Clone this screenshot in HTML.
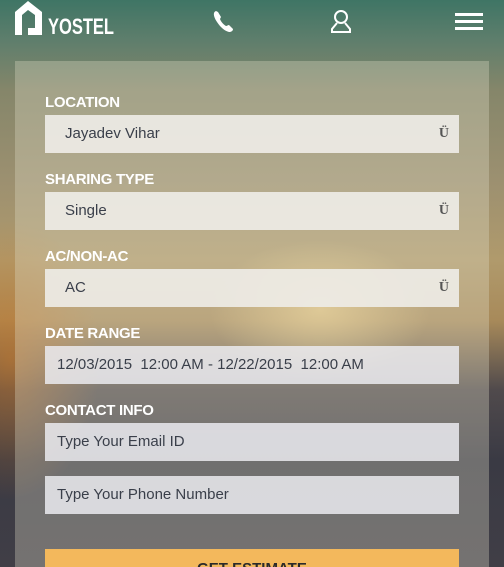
<!DOCTYPE html>
<html><head><meta charset="utf-8"><style>
*{margin:0;padding:0;box-sizing:border-box}
html{width:504px;height:567px;overflow:hidden;background:#45434a}
body{width:504px;height:567px;overflow:hidden;position:relative;font-family:"Liberation Sans",sans-serif;
background:
radial-gradient(ellipse 110px 70px at 320px 310px,rgba(255,225,150,.6),rgba(255,200,100,0) 100%),
radial-gradient(ellipse 90px 140px at 10px 360px,rgba(200,120,40,.6),rgba(200,120,40,0) 100%),
linear-gradient(180deg,#3f7565 0px,#5e7e6c 40px,#85866a 90px,#9c9070 180px,#b09a6c 260px,#a88a5a 320px,#504a4c 390px,#3a3a44 460px,#403e46 567px);}
.panel{position:absolute;left:15px;top:61px;width:474px;height:506px;background:rgba(225,222,200,.33)}
.hdr{position:absolute;top:0;left:0;width:504px;height:45px}
label{position:absolute;left:45px;color:#fff;font-weight:bold;font-size:15px;letter-spacing:-.3px}
.in{position:absolute;left:45px;width:414px;height:38px;background:rgba(238,236,230,.92);color:#3a3f4a;font-size:15px;line-height:38px;padding-left:20px}
.in.t{background:rgba(235,235,240,.85);padding-left:12px}
.car{position:absolute;right:10px;top:0;font-size:14px;color:#555;font-family:"Liberation Serif",serif;font-weight:bold}
.btn{position:absolute;left:45px;top:549px;width:414px;height:30px;background:#f3b85c;text-align:center;font-weight:bold;font-size:15px;color:#2a2a2a;padding-top:11px}
</style></head><body>
<div class="panel"></div>
<svg class="hdr" viewBox="0 0 504 45">
<path d="M15 35V12L28 1 42 12V35H28V28H35V15L28 10 22 15V35Z" fill="#fff"/>
<text x="48" y="34" fill="#fff" font-family="Liberation Sans" font-weight="bold" font-size="22" textLength="66" lengthAdjust="spacingAndGlyphs">YOSTEL</text>
<path d="M216 11c-3 1-3 5 1 11s8 9 12 10c2 0 4-1 4-3l-4-4c-1 0-2 1-3 1-2-1-5-4-6-7l1-2-3-5z" fill="#fff"/>
<circle cx="341" cy="17" r="6" fill="none" stroke="#fff" stroke-width="2"/>
<path d="M337 23l-5 6v3h18v-3l-5-6" fill="none" stroke="#fff" stroke-width="2"/>
<rect x="455" y="13" width="28" height="3" fill="#fff"/><rect x="455" y="20" width="28" height="3" fill="#fff"/><rect x="455" y="27" width="28" height="3" fill="#fff"/>
</svg>
<label style="top:94px">LOCATION</label>
<div class="in" style="top:115px">Jayadev Vihar<span class="car">Ü</span></div>
<label style="top:171px">SHARING TYPE</label>
<div class="in" style="top:192px">Single<span class="car">Ü</span></div>
<label style="top:248px">AC/NON-AC</label>
<div class="in" style="top:269px">AC<span class="car">Ü</span></div>
<label style="top:325px">DATE RANGE</label>
<div class="in t" style="top:346px">12/03/2015&nbsp; 12:00 AM - 12/22/2015&nbsp; 12:00 AM</div>
<label style="top:402px">CONTACT INFO</label>
<div class="in t" style="top:423px">Type Your Email ID</div>
<div class="in t" style="top:476px">Type Your Phone Number</div>
<div class="btn">GET ESTIMATE</div>
</body></html>
